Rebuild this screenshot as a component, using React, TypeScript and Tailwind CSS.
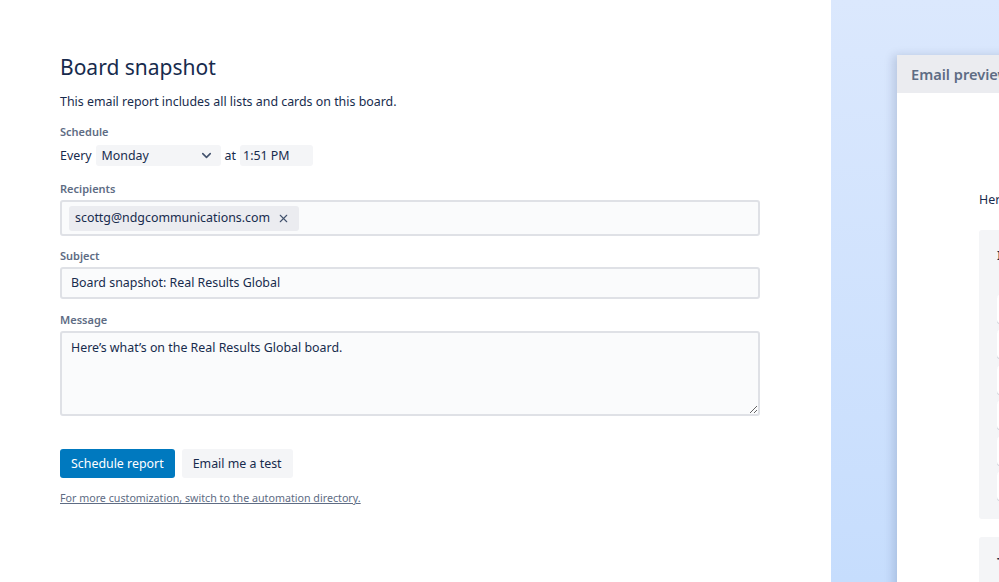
import { ChevronDown, X } from 'lucide-react';

function Label({ children }: { children: React.ReactNode }) {
  return <div className="text-[11px] font-semibold leading-4 text-[#5e6c84]">{children}</div>;
}

function PreviewList({ title, cards }: { title: string; cards: number }) {
  return (
    <div className="w-[300px] rounded-[3px] bg-[#f4f5f7] px-[18px] pt-[15px] pb-[19px]">
      <div className="text-[13px] font-semibold leading-5 text-[#172b4d]">{title}</div>
      <div className="mt-[30px] flex flex-col gap-[7.4px]">
        {Array.from({ length: cards }).map((_, i) => (
          <div key={i} className="h-[28px] rounded-[3px] bg-white shadow-[0_1px_0_#c7ccd4]" />
        ))}
      </div>
    </div>
  );
}

export default function App() {
  return (
    <div className="flex h-[582px] w-[999px] overflow-hidden bg-white font-['Noto_Sans',sans-serif] text-[#172b4d]">
      {/* Form */}
      <div className="w-[831px] shrink-0 pl-[60px] pr-[71px] pt-[52px]">
        <h1 className="text-[21px] font-normal leading-[30px]">Board snapshot</h1>
        <p className="mt-[10px] text-[12.4px] leading-5">This email report includes all lists and cards on this board.</p>

        <div className="mt-[12px]">
          <Label>Schedule</Label>
          <div className="mt-[5px] flex h-[21px] items-center text-[12.4px] leading-5">
            <span className="mr-[4px]">Every</span>
            <div className="flex h-[21px] w-[125px] items-center justify-between rounded-[3px] bg-[#f4f5f7] pl-[6px] pr-[7px]">
              <span>Monday</span>
              <ChevronDown size={15} strokeWidth={2.5} className="text-[#42526e]" />
            </div>
            <span className="mx-[4px]">at</span>
            <div className="flex h-[21px] w-[73px] items-center rounded-[3px] bg-[#f4f5f7] pl-[3px]">1:51 PM</div>
          </div>
        </div>

        <div className="mt-[15px]">
          <Label>Recipients</Label>
          <div className="mt-[3px] flex h-[36px] items-center rounded-[3px] border-2 border-[#dfe1e6] bg-[#fafbfc] px-[7px]">
            <div className="flex h-[25px] items-center gap-[7px] rounded-[3px] bg-[#ebecf0] pl-[6px] pr-[9px] text-[12.4px] leading-5">
              <span>scottg@ndgcommunications.com</span>
              <X size={13} className="text-[#42526e]" />
            </div>
          </div>
        </div>

        <div className="mt-[12px]">
          <Label>Subject</Label>
          <div className="mt-[3px] flex h-[32px] items-center rounded-[3px] border-2 border-[#dfe1e6] bg-[#fafbfc] px-[9px] text-[12.4px] leading-5">
            Board snapshot: Real Results Global
          </div>
        </div>

        <div className="mt-[13px]">
          <Label>Message</Label>
          <textarea
            readOnly
            defaultValue="Here’s what’s on the Real Results Global board."
            className="mt-[3px] block h-[85px] w-full resize-y rounded-[3px] border-2 border-[#dfe1e6] bg-[#fafbfc] px-[9px] py-[5px] text-[12.4px] leading-5 text-[#172b4d] outline-none"
          />
        </div>

        <div className="mt-[33px] flex gap-[7px]">
          <button className="h-[29px] rounded-[3px] bg-[#0079bf] px-[11px] text-[12.4px] leading-5 text-white">Schedule report</button>
          <button className="h-[29px] rounded-[3px] bg-[#f4f5f7] px-[11px] text-[12.4px] leading-5 text-[#172b4d]">Email me a test</button>
        </div>

        <a className="mt-[12px] block text-[10.7px] leading-4 text-[#5e6c84] underline">
          For more customization, switch to the automation directory.
        </a>
      </div>

      {/* Preview */}
      <div className="relative flex-1 overflow-hidden bg-gradient-to-b from-[#dbe8fd] to-[#c6ddfd] pl-[66px] pt-[55px]">
        <div className="w-[560px] rounded-tl-[3px] bg-white shadow-[-4px_0_10px_rgba(9,30,66,0.15)]">
          <div className="flex h-[38px] items-center bg-[#ebecf0] px-[14px] text-[14.6px] font-semibold leading-5 text-[#5e6c84]">
            Email preview
          </div>
          <div className="px-[82px] pt-[97px] pb-[40px]">
            <div className="text-[12.4px] leading-5 text-[#172b4d]">Here’s what’s on the Real Results Global board.</div>
            <div className="mt-[20px] flex flex-col gap-[18px]">
              <PreviewList title="In progress" cards={6} />
              <PreviewList title="To do" cards={3} />
            </div>
          </div>
        </div>
      </div>
    </div>
  );
}
